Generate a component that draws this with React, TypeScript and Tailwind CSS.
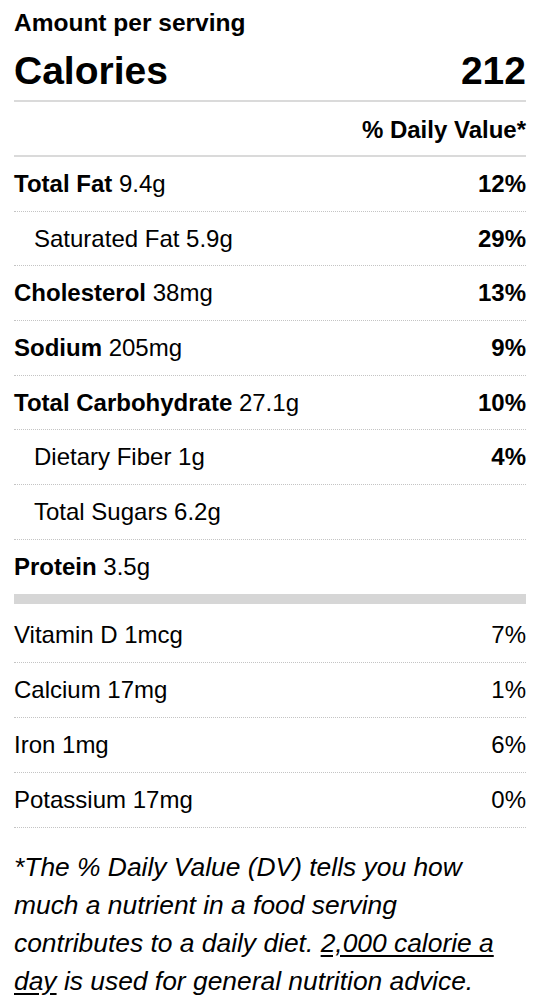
import React from "react";

type Row = { label: string; amount: string; dv?: string; bold?: boolean; indent?: boolean };

const main: Row[] = [
  { label: "Total Fat", amount: "9.4g", dv: "12%", bold: true },
  { label: "Saturated Fat", amount: "5.9g", dv: "29%", indent: true },
  { label: "Cholesterol", amount: "38mg", dv: "13%", bold: true },
  { label: "Sodium", amount: "205mg", dv: "9%", bold: true },
  { label: "Total Carbohydrate", amount: "27.1g", dv: "10%", bold: true },
  { label: "Dietary Fiber", amount: "1g", dv: "4%", indent: true },
  { label: "Total Sugars", amount: "6.2g", indent: true },
];

const minerals = [
  { label: "Vitamin D", amount: "1mcg", dv: "7%" },
  { label: "Calcium", amount: "17mg", dv: "1%" },
  { label: "Iron", amount: "1mg", dv: "6%" },
  { label: "Potassium", amount: "17mg", dv: "0%" },
];

export default function App() {
  return (
    <div
      className="bg-white text-black pl-[14px] pr-[10px] w-[536px]"
      style={{ fontFamily: '"Liberation Sans", Arial, sans-serif' }}
    >
      <div className="pt-[9px] text-[24.5px] leading-[28px] font-bold">Amount per serving</div>
      <div className="flex justify-between items-end pt-[14px] pb-[10px] border-b-2 border-[#dadada] text-[39px] leading-[39px] font-bold">
        <span>Calories</span>
        <span>212</span>
      </div>
      <div className="flex justify-end items-center pt-[2px] h-[55px] border-b-2 border-[#dadada] text-[24px] font-bold">
        % Daily Value*
      </div>
      {main.map((r) => (
        <div
          key={r.label}
          className="flex justify-between items-center h-[54.7px] border-b border-dotted border-[#c4c4c4] text-[24px]"
        >
          <span className={r.indent ? "pl-[20px]" : ""}>
            {r.bold ? <span className="font-bold">{r.label}</span> : r.label} {r.amount}
          </span>
          {r.dv && <span className="font-bold">{r.dv}</span>}
        </div>
      ))}
      <div className="flex items-center h-[54px] text-[24px]">
        <span>
          <span className="font-bold">Protein</span> 3.5g
        </span>
      </div>
      <div className="h-[10px] bg-[#d6d6d6] mb-[4px]" />
      {minerals.map((r) => (
        <div
          key={r.label}
          className="flex justify-between items-center h-[55px] border-b border-dotted border-[#c4c4c4] text-[24px]"
        >
          <span>
            {r.label} {r.amount}
          </span>
          <span>{r.dv}</span>
        </div>
      ))}
      <p className="pt-[20px] pr-[20px] italic text-[26.4px] leading-[38px]">
        *The % Daily Value (DV) tells you how much a nutrient in a food serving contributes to a daily diet.{" "}
        <span className="underline underline-offset-[3px]">2,000 calorie a day</span> is used for general nutrition
        advice.
      </p>
    </div>
  );
}
